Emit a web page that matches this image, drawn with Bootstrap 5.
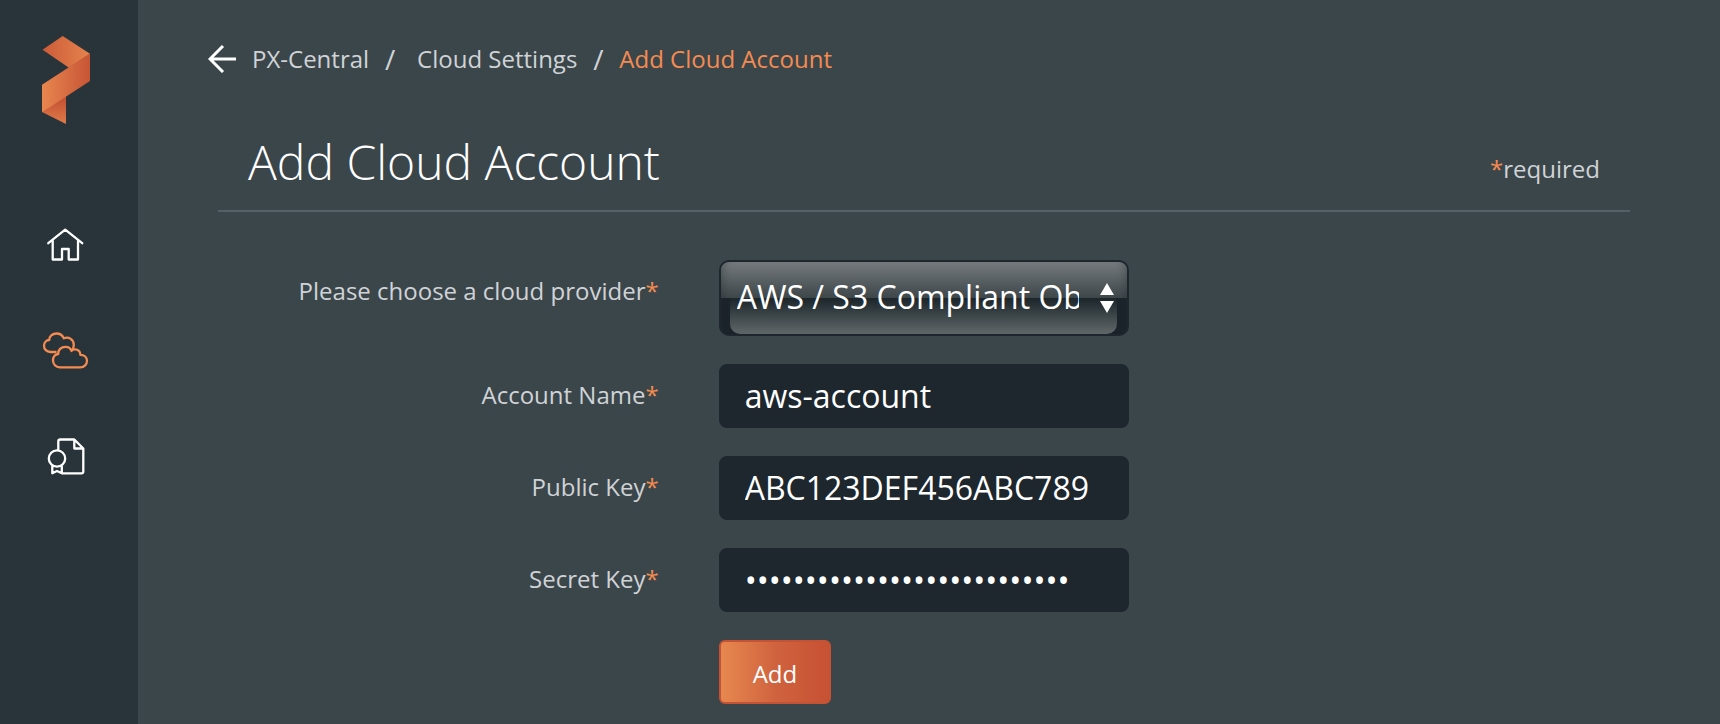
<!DOCTYPE html>
<html lang="en">
<head>
<meta charset="utf-8">
<meta name="viewport" content="width=device-width, initial-scale=1">
<title>Add Cloud Account</title>
<link href="https://cdn.jsdelivr.net/npm/bootstrap@5.3.0/dist/css/bootstrap.min.css" rel="stylesheet">
<style>
  body { background: #3b464b; color: #d0d3d6; font-family: "Open Sans", "Noto Sans", sans-serif; font-size: 24px; line-height: 32px; }
  a { color: inherit; text-decoration: none; }
  .side { width: 138px; background: #28343a; color: #fff; padding: 36px 0 0 42px; }
  .side svg { display: block; overflow: visible; }
  .side .nav { gap: 63px; margin-top: 100px; }
  .side .nav-link { padding: 0; color: #fff; }
  .side .nav-link.active { color: #f58b50; }
  .page-body { min-width: 0; padding: 43px 90px 16px 80px; }
  .breadcrumb { --bs-breadcrumb-divider: none; padding-left: 34px; margin: 0; }
  .slash { font-size: 28px; width: 48px; padding-left: 16px; }
  .slash-last { width: 42px; }
  .back { position: absolute; left: -10px; top: 2px; }
  .accent { color: #f58b50; }
  .page-head { padding: 0 30px 16px; margin-top: 55px; border-bottom: 2px solid #566067; }
  h1 { font-size: 48px; line-height: 64px; font-weight: 300; color: #fff; margin: 0; }
  .required-note { padding-top: 14px; }
  .account-form { padding-top: 48px; }
  .account-form .row { --bs-gutter-x: 60px; margin: 0 0 28px; }
  .account-form .row:last-child { margin-bottom: 0; }
  .account-form label { padding-top: 15px; }
  .form-control, .form-control:focus { height: 64px; padding: 0 24px 2px; border: 2px solid #1d272d; border-radius: 8px; background: #1d272d; color: #fff; font-size: 32px; line-height: 44px; }
  .gloss { position: relative; height: 76px; border: 2px solid #1d272d; border-radius: 10px; background: linear-gradient(#757a7d, #3d4649 36px, #1b242a 36px, #1b242a); overflow: hidden; }
  .gloss::before { content: ""; position: absolute; inset: 36px 10px 0 9px; border-radius: 0 0 10px 10px; background: linear-gradient(#1b252a, #606869); }
  .gloss::after { content: ""; position: absolute; inset: 0; border-radius: 8px; box-shadow: inset 9px 0 9px -8px #1d272d66, inset -9px 0 9px -8px #1d272d66; pointer-events: none; }
  .gloss .form-select, .gloss .form-select:focus { position: relative; height: 72px; padding: 0 48px 2px 16px; border: 0; box-shadow: none; background: transparent; color: #fff; font-size: 32px; line-height: 44px; }
  .gloss .form-select option { color: #fff; background: #1d272d; }
  .gloss svg { position: absolute; right: 13px; top: 21px; z-index: 1; pointer-events: none; }
  .btn-add, .btn-add:hover { height: 64px; padding: 3px 32px 0; border: 2px solid #c65133; border-radius: 6px; background: linear-gradient(90deg, #e7884f, #d0633f 50%, #c65133); color: #fff; font-size: 24px; line-height: 32px; }
</style>
</head>
<body>
<div class="d-flex min-vh-100">
  <aside class="side flex-shrink-0">
    <a href="#" aria-label="Portworx">
      <svg width="48" height="88" viewBox="0 0 48 88">
        <defs>
          <linearGradient id="top" x1="0" y1="0" x2="1" y2="0"><stop stop-color="#cc5b38"/><stop offset="1" stop-color="#e5834d"/></linearGradient>
          <linearGradient id="mid" x1="0" y1="0" x2="1" y2="0"><stop stop-color="#e8864f"/><stop offset="1" stop-color="#c75535"/></linearGradient>
          <linearGradient id="tail" x1="0.7" y1="0.2" x2="0.7" y2="1"><stop stop-color="#c55435"/><stop offset="1" stop-color="#e07b48"/></linearGradient>
        </defs>
        <path d="M20.7 0 L48 17.8 L27 31.8 L.5 13.8Z" fill="url(#top)"/>
        <path d="M24 58 V88 L0 76Z" fill="url(#tail)"/>
        <path d="M48 17.6 V45 L0 76.3 V48.8Z" fill="url(#mid)"/>
      </svg>
    </a>
    <nav class="nav flex-column" aria-label="Main">
      <a class="nav-link" href="#" aria-label="Home">
        <svg width="48" height="42" viewBox="0 0 48 42" fill="none" stroke="currentColor" stroke-width="2.3" stroke-linecap="round" stroke-linejoin="round">
          <path d="M6.300 19.200 L23.200 5.700 L40.200 19.200 M10.700 16.500 V35.500 H20 V25 H26.700 V35.500 H36 V16.500"/>
        </svg>
      </a>
      <a class="nav-link active" href="#" aria-label="Cloud settings">
        <svg width="48" height="42" viewBox="0 1 48 42" fill="none" stroke="currentColor" stroke-width="2.3" stroke-linejoin="round">
          <path d="M14.5 24 H8.3 C4.7 24 2 21.2 2 17.8 C2 14.5 4.3 12.1 7.3 12 C7 8.200 10.500 5.500 14.500 5.500 C18 5.500 20.500 7.500 21.800 10.300 C26.800 8.300 31.900 11.500 31.800 17 C31.800 19.500 31 21.300 29.500 23 C28.700 20.500 26.500 18.800 23.500 18.800 C19 18.800 16 22 16.200 26 C13 26.300 11 29 11 32.200 C11 36 13.800 39.300 17.800 39.300 H38.500 C42.300 39.300 45 36.300 45 32.800 C45 29.300 42.300 26.800 38.300 26.800 C38.600 23.500 36 21.300 33 21.300 C31.500 21.300 30.200 21.900 29.500 23"/>
        </svg>
      </a>
      <a class="nav-link" href="#" aria-label="Licenses">
        <svg width="48" height="42" viewBox="0 0 48 42" fill="none" stroke="currentColor" stroke-width="2.3" stroke-linejoin="round">
          <path d="M16.300 16 V7.500 Q16.300 5.500 18.300 5.500 H32.300 L41.300 14.500 V37.500 Q41.300 39.300 39.500 39.300 H20 M32.300 5.500 V14.500 H41.300"/>
          <circle cx="15" cy="24.500" r="8.200"/>
          <path d="M10.300 31.500 V39.300 L15 37 L19.800 39.300 V31.500"/>
        </svg>
      </a>
    </nav>
  </aside>

  <main class="page-body flex-grow-1">
    <nav class="position-relative" aria-label="breadcrumb">
      <a class="back" href="#" aria-label="Back">
        <svg class="d-block" width="28" height="28" viewBox="0 0 28 28" fill="none" stroke="#fff" stroke-width="3"><path d="M15 1 L2 14 L15 27 M2 14 H28"/></svg>
      </a>
      <ol class="breadcrumb">
        <li><a href="#">PX-Central</a></li>
        <li class="slash" aria-hidden="true">/</li>
        <li><a href="#">Cloud Settings</a></li>
        <li class="slash slash-last" aria-hidden="true">/</li>
        <li class="accent" aria-current="page">Add Cloud Account</li>
      </ol>
    </nav>

    <header class="page-head d-flex justify-content-between align-items-center">
      <h1>Add Cloud Account</h1>
      <div class="required-note"><span class="accent">*</span>required</div>
    </header>

    <form class="account-form">
      <div class="row">
        <label class="col-4 text-end" for="provider">Please choose a cloud provider<span class="accent">*</span></label>
        <div class="col-4">
          <div class="gloss">
            <select class="form-select" id="provider"><option>AWS / S3 Compliant Object Store</option><option>Azure</option><option>Google Cloud</option></select>
            <svg width="14" height="30" viewBox="0 0 14 30" fill="#fff"><path d="M7 0 L14 12 H0Z M0 18 H14 L7 30Z"/></svg>
          </div>
        </div>
      </div>
      <div class="row">
        <label class="col-4 text-end" for="account">Account Name<span class="accent">*</span></label>
        <div class="col-4"><input class="form-control" id="account" type="text" value="aws-account"></div>
      </div>
      <div class="row">
        <label class="col-4 text-end" for="public-key">Public Key<span class="accent">*</span></label>
        <div class="col-4"><input class="form-control" id="public-key" type="text" value="ABC123DEF456ABC789"></div>
      </div>
      <div class="row">
        <label class="col-4 text-end" for="secret-key">Secret Key<span class="accent">*</span></label>
        <div class="col-4"><input class="form-control" id="secret-key" type="password" value="abcdefghijklmnopqrstuvwxyz1"></div>
      </div>
      <div class="row">
        <div class="col-4 offset-4"><button class="btn btn-add" type="submit">Add</button></div>
      </div>
    </form>
  </main>
</div>
<script src="https://cdn.jsdelivr.net/npm/bootstrap@5.3.0/dist/js/bootstrap.bundle.min.js"></script>
</body>
</html>
